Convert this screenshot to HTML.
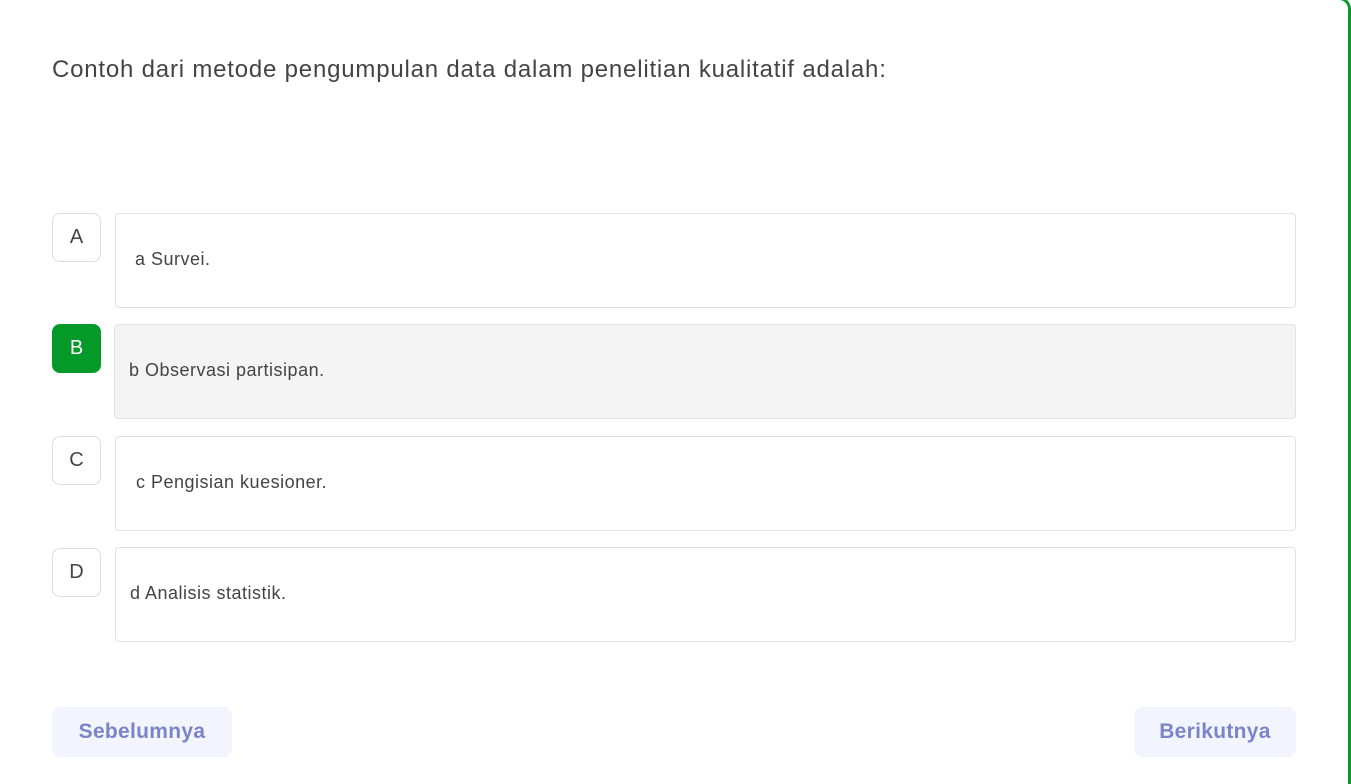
<!DOCTYPE html>
<html><head><style>
html,body{margin:0;width:1351px;height:784px;overflow:hidden;}
body{background:#fff;font-family:"Liberation Sans",sans-serif;color:#444;position:relative;}
.card{position:absolute;left:-20px;top:-3px;width:1371px;height:787px;border:3px solid #0a9a2c;border-bottom:none;border-radius:12px 12px 0 0;background:#fff;box-sizing:border-box;}
.q{position:absolute;left:52px;top:56px;font-size:24px;letter-spacing:0.8px;color:#444;}
.lab{position:absolute;left:52px;width:49px;height:49px;border:1px solid #ddd;border-radius:8px;box-sizing:border-box;text-align:center;line-height:47px;font-size:20px;color:#444;}
.lab.sel{background:#05992a;border-color:#05992a;color:#fff;}
.opt{position:absolute;left:115px;width:1181px;height:95px;border:1px solid #e2e2e2;border-radius:4px;box-sizing:border-box;font-size:18px;letter-spacing:0.5px;color:#444;}
.opt span{position:absolute;top:35px;}
.opt.sel{background:#f4f4f4;left:114px;width:1182px;}
.btn{position:absolute;top:707px;height:50px;background:#f2f5fd;border-radius:8px;color:#7b84c9;font-weight:bold;font-size:21px;letter-spacing:0.3px;line-height:50px;text-align:center;}
</style></head><body>
<div class="card"></div>
<div class="q">Contoh dari metode pengumpulan data dalam penelitian kualitatif adalah:</div>
<div class="lab" style="top:213px">A</div>
<div class="opt" style="top:213px"><span style="left:19px">a Survei.</span></div>
<div class="lab sel" style="top:324px">B</div>
<div class="opt sel" style="top:324px"><span style="left:14px">b Observasi partisipan.</span></div>
<div class="lab" style="top:436px">C</div>
<div class="opt" style="top:436px"><span style="left:20px">c Pengisian kuesioner.</span></div>
<div class="lab" style="top:548px">D</div>
<div class="opt" style="top:547px"><span style="left:14px">d Analisis statistik.</span></div>
<div class="btn" style="left:52px;width:180px">Sebelumnya</div>
<div class="btn" style="left:1134px;width:162px">Berikutnya</div>
</body></html>
